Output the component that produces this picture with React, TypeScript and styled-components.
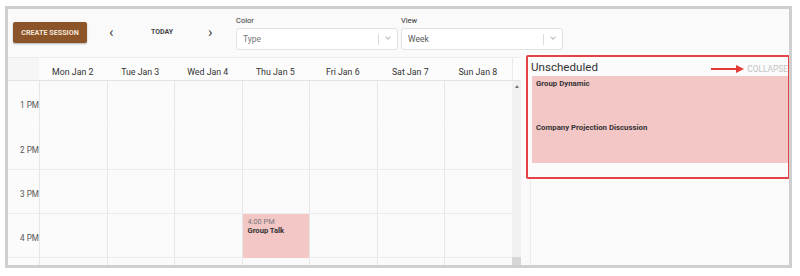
import React from "react";
import styled, { createGlobalStyle } from "styled-components";

const days = ["Mon Jan 2", "Tue Jan 3", "Wed Jan 4", "Thu Jan 5", "Fri Jan 6", "Sat Jan 7", "Sun Jan 8"];
const hours = [
  { label: "1 PM", height: 44, line: false },
  { label: "2 PM", height: 43, line: true },
  { label: "3 PM", height: 43, line: true },
  { label: "4 PM", height: 43, line: true },
  { label: "", height: 12, line: false },
];

const App = () => {
  return (
    <>
      <GlobalStyle />
      <Frame>
        <Toolbar>
          <CreateButton>CREATE SESSION</CreateButton>
          <NavArrow>‹</NavArrow>
          <TodayText>TODAY</TodayText>
          <NavArrow>›</NavArrow>
          <Field>
            <FieldLabel>Color</FieldLabel>
            <SelectBox>
              <SelectValue $placeholder>Type</SelectValue>
              <SelectDivider />
              <Chevron />
            </SelectBox>
          </Field>
          <Field>
            <FieldLabel>View</FieldLabel>
            <SelectBox>
              <SelectValue>Week</SelectValue>
              <SelectDivider />
              <Chevron />
            </SelectBox>
          </Field>
        </Toolbar>
        <Main>
          <Calendar>
            <HeaderRow>
              <CornerCell />
              {days.map((d) => (
                <DayHead key={d}>{d}</DayHead>
              ))}
              <Gutter />
            </HeaderRow>
            <Body>
              <Grid>
                {hours.map((h, i) => (
                  <HourRow key={i} $h={h.height} $line={h.line}>
                    <TimeCell>{h.label}</TimeCell>
                    {days.map((d, j) => (
                      <DayCell key={d}>
                        {i === 3 && j === 3 && (
                          <Event>
                            <EventTime>4:00 PM</EventTime>
                            <EventTitle>Group Talk</EventTitle>
                          </Event>
                        )}
                      </DayCell>
                    ))}
                  </HourRow>
                ))}
              </Grid>
              <Scrollbar>
                <ScrollUp />
                <ScrollGrip />
              </Scrollbar>
            </Body>
          </Calendar>
          <SidePanel>
            <Highlight>
              <PanelHead>
                <PanelTitle>Unscheduled</PanelTitle>
                <CollapseWrap>
                  <svg width="34" height="8" viewBox="0 0 34 8">
                    <line x1="0" y1="4" x2="26" y2="4" stroke="#e53935" strokeWidth="2" />
                    <polygon points="25,0 33,4 25,8" fill="#e53935" />
                  </svg>
                  <CollapseText>COLLAPSE</CollapseText>
                </CollapseWrap>
              </PanelHead>
              <PendingList>
                <PendingItem>Group Dynamic</PendingItem>
                <PendingItem>Company Projection Discussion</PendingItem>
              </PendingList>
            </Highlight>
            <PanelRest />
          </SidePanel>
        </Main>
      </Frame>
    </>
  );
};

export default App;

const GlobalStyle = createGlobalStyle`
  body {
    margin: 0;
    background: #ffffff;
    font-family: Roboto, "Liberation Sans", sans-serif;
  }
`;

const Frame = styled.div`
  margin: 6px 0 0 5px;
  width: 781px;
  height: 256px;
  border: 3px solid #cfcfcf;
  background: #fafafa;
  display: flex;
  flex-direction: column;
  overflow: hidden;
`;

const Toolbar = styled.div`
  height: 48px;
  flex-shrink: 0;
  display: flex;
  align-items: flex-start;
  padding-left: 5px;
  box-sizing: border-box;
`;

const CreateButton = styled.button`
  margin-top: 13px;
  width: 74px;
  height: 21px;
  padding: 0;
  border: 0;
  border-radius: 2px;
  background: #8b5529;
  color: #f1e4d6;
  font-family: Roboto, "Liberation Sans", sans-serif;
  font-size: 7.2px;
  font-weight: 700;
  box-shadow: 0 1px 2px rgba(0, 0, 0, 0.3);
`;

const NavArrow = styled.span`
  margin-top: 16px;
  width: 8px;
  margin-left: 22px;
  font-size: 15px;
  line-height: 14px;
  color: #444;
  &:last-of-type {
    margin-left: 1px;
  }
`;

const TodayText = styled.span`
  margin-top: 19px;
  width: 90px;
  text-align: center;
  font-size: 7px;
  font-weight: 700;
  color: #444;
`;

const Field = styled.div`
  display: flex;
  flex-direction: column;
  margin-left: 20px;
  & + & {
    margin-left: 3px;
  }
`;

const FieldLabel = styled.span`
  margin-top: 7px;
  height: 12px;
  font-size: 7.5px;
  color: #333;
`;

const SelectBox = styled.div`
  width: 162px;
  height: 22px;
  box-sizing: border-box;
  border: 1px solid #e2e2e2;
  border-radius: 3px;
  background: #fff;
  display: flex;
  align-items: center;
  padding-left: 6px;
`;

const SelectValue = styled.span<{ $placeholder?: boolean }>`
  flex: 1;
  font-size: 8.5px;
  color: ${(p) => (p.$placeholder ? "#777" : "#555")};
`;

const SelectDivider = styled.span`
  width: 1px;
  height: 11px;
  background: #dcdcdc;
`;

const Chevron = styled.span`
  width: 18px;
  height: 10px;
  position: relative;
  &::after {
    content: "";
    position: absolute;
    left: 7px;
    top: 1px;
    width: 3px;
    height: 3px;
    border-right: 1px solid #bbb;
    border-bottom: 1px solid #bbb;
    transform: rotate(45deg);
  }
`;

const Main = styled.div`
  flex: 1;
  display: flex;
  min-height: 0;
`;

const Calendar = styled.div`
  width: 513px;
  display: flex;
  flex-direction: column;
  border-top: 1px solid #ebebeb;
`;

const HeaderRow = styled.div`
  height: 22px;
  flex-shrink: 0;
  display: flex;
  border-bottom: 1px solid #e3e3e3;
  background: #fcfcfc;
`;

const CornerCell = styled.div`
  width: 31px;
  background: #f6f6f6;
`;

const DayHead = styled.div`
  width: 67.5px;
  font-size: 8.8px;
  color: #333;
  text-align: center;
  line-height: 9px;
  padding-top: 10px;
  box-sizing: border-box;
`;

const Gutter = styled.div`
  flex: 1;
  border-left: 1px solid #ebebeb;
`;

const Body = styled.div`
  flex: 1;
  display: flex;
  overflow: hidden;
`;

const Grid = styled.div`
  width: 503.5px;
`;

const HourRow = styled.div<{ $h: number; $line: boolean }>`
  height: ${(p) => p.$h}px;
  display: flex;
  border-bottom: 1px solid ${(p) => (p.$line ? "#ececec" : "transparent")};
`;

const TimeCell = styled.div`
  width: 31px;
  box-sizing: border-box;
  display: flex;
  align-items: center;
  justify-content: flex-end;
  padding-top: 4px;
  font-size: 8.2px;
  color: #555;
  background: #fbfbfb;
`;

const DayCell = styled.div`
  width: 67.5px;
  border-left: 1px solid #e6e6e6;
  box-sizing: border-box;
  background: #fafafa;
  position: relative;
`;

const Event = styled.div`
  position: absolute;
  inset: 0 0 -1px 0;
  background: #f4c7c7;
  padding: 3px 5px;
  display: flex;
  flex-direction: column;
`;

const EventTime = styled.span`
  font-size: 7.4px;
  color: #777;
  line-height: 9px;
`;

const EventTitle = styled.span`
  font-size: 7.6px;
  font-weight: 700;
  color: #333;
  line-height: 10px;
`;

const Scrollbar = styled.div`
  width: 10px;
  background: #f1f1f1;
  display: flex;
  flex-direction: column;
  justify-content: space-between;
  align-items: center;
  padding: 4px 0 0;
`;

const ScrollUp = styled.span`
  width: 0;
  height: 0;
  border-left: 2.5px solid transparent;
  border-right: 2.5px solid transparent;
  border-bottom: 3px solid #777;
`;

const ScrollGrip = styled.span`
  width: 10px;
  height: 8px;
  background: #d6d6d6;
`;

const SidePanel = styled.div`
  flex: 1;
  display: flex;
  flex-direction: column;
  padding-left: 5px;
  margin-top: -2px;
`;

const Highlight = styled.div`
  width: 264px;
  height: 124px;
  flex-shrink: 0;
  box-sizing: border-box;
  border: 2px solid #e34246;
  border-radius: 2px;
  padding: 0 0 14px 3px;
  display: flex;
  flex-direction: column;
  background: #fbfbfb;
  overflow: hidden;
`;

const PanelHead = styled.div`
  height: 19px;
  display: flex;
  align-items: flex-end;
  justify-content: space-between;
  padding-bottom: 2px;
  box-sizing: border-box;
`;

const PanelTitle = styled.span`
  font-size: 11.6px;
  color: #333;
  line-height: 13px;
`;

const CollapseWrap = styled.div`
  display: flex;
  align-items: center;
  gap: 2px;
  margin-right: 0;
`;

const CollapseText = styled.span`
  font-size: 8.4px;
  color: #c4c4c4;
`;

const PendingList = styled.div`
  flex: 1;
  background: #f4c7c7;
  margin-left: 1px;
  padding: 3px 4px;
  display: flex;
  flex-direction: column;
  gap: 34px;
`;

const PendingItem = styled.span`
  font-size: 7.8px;
  font-weight: 700;
  color: #333;
  line-height: 10px;
`;

const PanelRest = styled.div`
  flex: 1;
  margin-left: 4px;
  border-left: 1px solid #ececec;
`;
